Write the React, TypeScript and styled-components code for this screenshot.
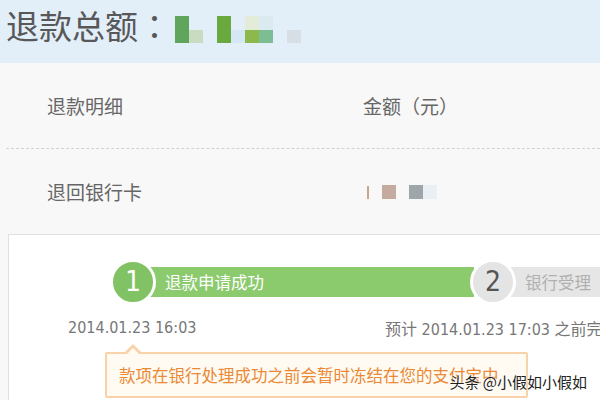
import React from "react";
import styled, { createGlobalStyle } from "styled-components";

const GlobalStyle = createGlobalStyle`
  html, body {
    margin: 0;
    padding: 0;
  }
  body {
    background: #f8f8f8;
    font-family: "Noto Sans CJK SC", sans-serif;
  }
`;

const Page = styled.div`
  position: relative;
  width: 600px;
  height: 400px;
  overflow: hidden;
  background: #f8f8f8;
`;

const Header = styled.div`
  box-sizing: border-box;
  height: 63px;
  padding: 9px 0 0 6px;
  display: flex;
  align-items: flex-start;
  background: #e2eef8;
`;

const Title = styled.h1`
  margin: 0;
  font-size: 33px;
  line-height: 33px;
  font-weight: normal;
  color: #585858;
  font-family: "Noto Sans CJK SC", sans-serif;
`;

// 冒号居中
const Colon = styled.span`
  font-family: "Noto Sans CJK TC", sans-serif;
`;

// 打码的金额
const Mosaic = styled.div<{ $top?: number; $left?: number }>`
  display: flex;
  align-items: flex-end;
  margin-top: ${(p) => p.$top || 0}px;
  margin-left: ${(p) => p.$left || 0}px;
`;

const MosaicCol = styled.div`
  display: flex;
  flex-direction: column;
`;

const Pixel = styled.span<{ $w: number; $h: number; $c?: string }>`
  display: block;
  flex: none;
  width: ${(p) => p.$w}px;
  height: ${(p) => p.$h}px;
  background: ${(p) => p.$c || "transparent"};
`;

const DetailList = styled.div`
  padding-left: 6px;
`;

const DetailRow = styled.div<{ $dashed?: boolean }>`
  display: grid;
  grid-template-columns: 316px 1fr;
  align-items: center;
  height: 85px;
  padding-left: 41px;
  font-size: 19px;
  line-height: 24px;
  color: #666;
  border-bottom: ${(p) => (p.$dashed ? "1px dashed #d2d2d2" : "none")};
`;

const Panel = styled.div`
  box-sizing: border-box;
  height: 200px;
  margin-left: 8px;
  padding-top: 24px;
  background: #fff;
  border: 1px solid #e0e0e0;
  border-right: none;
`;

const Track = styled.div`
  display: flex;
  align-items: center;
  padding-left: 101px;
`;

const StepCircle = styled.div<{ $done?: boolean; $pull?: number }>`
  position: relative;
  z-index: 1;
  flex: none;
  width: 40px;
  height: 40px;
  margin-left: ${(p) => (p.$pull ? -p.$pull : 0)}px;
  border: 3px solid #fff;
  border-radius: 50%;
  display: flex;
  align-items: center;
  justify-content: center;
  background: ${(p) => (p.$done ? "#80c264" : "#e4e4e4")};
  color: ${(p) => (p.$done ? "#fff" : "#555")};
  font-family: "DejaVu Sans Condensed", "Liberation Sans", sans-serif;
  font-size: 28px;
  line-height: 1;
`;

const StepBar = styled.div<{ $done?: boolean; $width?: number }>`
  box-sizing: border-box;
  height: 30px;
  margin-left: -6px;
  padding-left: 15px;
  display: flex;
  align-items: center;
  white-space: nowrap;
  background: ${(p) => (p.$done ? "#8cca6e" : "#e6e6e6")};
  color: ${(p) => (p.$done ? "#fff" : "#b0b0b0")};
  font-size: 16.5px;
  ${(p) => (p.$width ? `width: ${p.$width}px; flex: none;` : "flex: 1;")}
`;

const TimeRow = styled.div`
  display: flex;
  margin-top: 13px;
  padding-left: 59px;
  font-family: "DejaVu Sans Condensed", "Liberation Sans", "Noto Sans CJK SC",
    sans-serif;
  font-size: 16px;
  line-height: 20px;
  color: #777;
  white-space: nowrap;
`;

const TimeCell = styled.div<{ $width?: number }>`
  flex: none;
  width: ${(p) => (p.$width ? `${p.$width}px` : "auto")};
`;

const Cjk = styled.span`
  font-family: "Noto Sans CJK SC", sans-serif;
`;

const Tip = styled.div`
  position: relative;
  box-sizing: border-box;
  width: 423px;
  margin: 12px 0 0 96px;
  padding: 10px 0 10px 12px;
  border: 2px solid #f8d2a8;
  border-radius: 2px;
  background: #fffaf2;
  color: #ea8936;
  font-size: 16.5px;
  line-height: 22px;
  white-space: nowrap;
  &::before {
    content: "";
    position: absolute;
    left: 18px;
    top: -10px;
    border-left: 8px solid transparent;
    border-right: 8px solid transparent;
    border-bottom: 8px solid #f8d2a8;
  }
  &::after {
    content: "";
    position: absolute;
    left: 20px;
    top: -6px;
    border-left: 6px solid transparent;
    border-right: 6px solid transparent;
    border-bottom: 6px solid #fffaf2;
  }
`;

const Watermark = styled.div`
  position: absolute;
  right: 13px;
  bottom: 8px;
  font-size: 15px;
  line-height: 20px;
  color: #222;
  text-shadow: 0 0 2px #fff, 0 0 2px #fff;
`;

const amountCols = [
  { top: "#5fa55b", bottom: "#5fa55b" },
  { top: "", bottom: "#c9dcc2" },
  { top: "", bottom: "" },
  { top: "#6aa93d", bottom: "#6aa93d" },
  { top: "", bottom: "#d5e7f4" },
  { top: "#e3ecd8", bottom: "#8db94a" },
  { top: "#dbeaf0", bottom: "#7cbd93" },
  { top: "", bottom: "" },
  { top: "", bottom: "#d5dfe5" },
];

const cardPixels = [
  { w: 2, h: 13, c: "#c9a58a" },
  { w: 13, h: 14, c: "" },
  { w: 14, h: 14, c: "#c3ab9f" },
  { w: 13, h: 14, c: "" },
  { w: 14, h: 14, c: "#9ea6a9" },
  { w: 14, h: 14, c: "#e9eff3" },
];

const App: React.FC = () => {
  return (
    <Page>
      <GlobalStyle />
      <Header>
        <Title>
          退款总额<Colon>：</Colon>
        </Title>
        <Mosaic $top={7} $left={4}>
          {amountCols.map((col, i) => (
            <MosaicCol key={i}>
              <Pixel $w={14} $h={14} $c={col.top} />
              <Pixel $w={14} $h={13} $c={col.bottom} />
            </MosaicCol>
          ))}
        </Mosaic>
      </Header>

      <DetailList>
        <DetailRow $dashed>
          <span>退款明细</span>
          <span>金额（元）</span>
        </DetailRow>
        <DetailRow>
          <span>退回银行卡</span>
          <Mosaic $left={4}>
            {cardPixels.map((px, i) => (
              <Pixel key={i} $w={px.w} $h={px.h} $c={px.c} />
            ))}
          </Mosaic>
        </DetailRow>
      </DetailList>

      <Panel>
        <Track>
          <StepCircle $done>1</StepCircle>
          <StepBar $done $width={324}>
            退款申请成功
          </StepBar>
          <StepCircle $pull={4}>2</StepCircle>
          <StepBar>银行受理</StepBar>
        </Track>
        <TimeRow>
          <TimeCell $width={317}>2014.01.23 16:03</TimeCell>
          <TimeCell>
            <Cjk>预计</Cjk> 2014.01.23 17:03 <Cjk>之前完成</Cjk>
          </TimeCell>
        </TimeRow>
        <Tip>款项在银行处理成功之前会暂时冻结在您的支付宝中</Tip>
      </Panel>

      <Watermark>头条 @小假如小假如</Watermark>
    </Page>
  );
};

export default App;
